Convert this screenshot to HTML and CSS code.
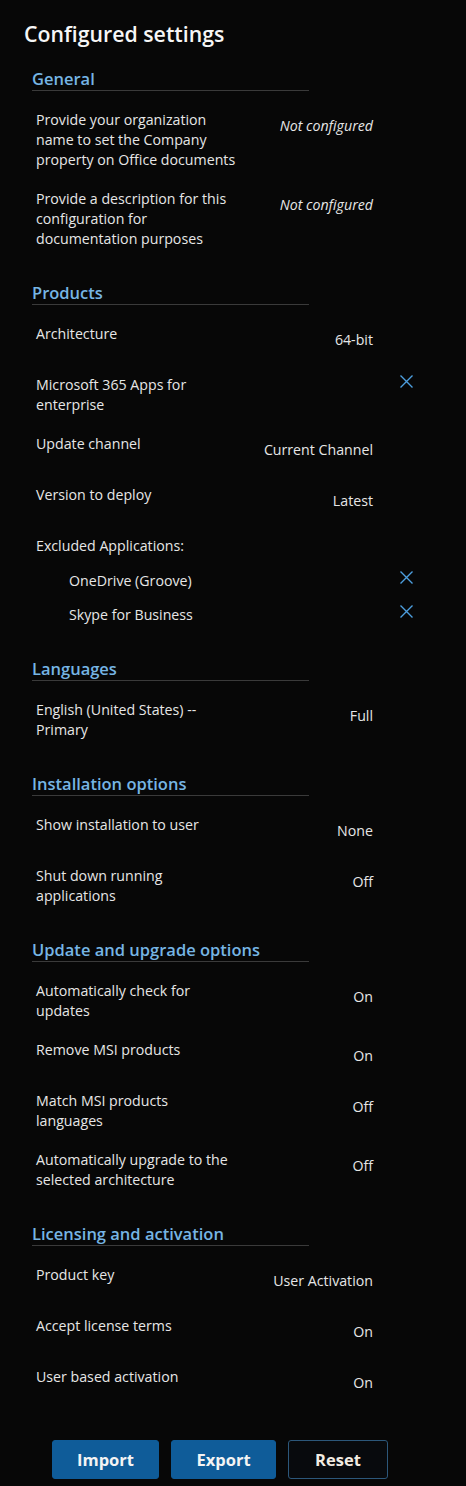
FILE: index.html
```html
<!DOCTYPE html>
<html lang="en">
<head>
<meta charset="utf-8">
<title>Configured settings</title>
<link rel="stylesheet" href="styles.css">
</head>
<body>
<main class="panel">
  <h1 class="title">Configured settings</h1>

  <section class="group">
    <h2 class="group-title">General</h2>
    <div class="row">
      <div class="label">Provide your organization name to set the Company property on Office documents</div>
      <div class="value italic">Not configured</div>
    </div>
    <div class="row">
      <div class="label">Provide a description for this configuration for documentation purposes</div>
      <div class="value italic">Not configured</div>
    </div>
  </section>

  <section class="group">
    <h2 class="group-title">Products</h2>
    <div class="row">
      <div class="label">Architecture</div>
      <div class="value">64-bit</div>
    </div>
    <div class="row">
      <div class="label">Microsoft 365 Apps for enterprise</div>
      <div class="value"></div>
      <button class="remove" aria-label="Remove"><svg viewBox="0 0 13 13" width="13" height="13"><path d="M0.5 0.5L12.5 12.5M12.5 0.5L0.5 12.5"/></svg></button>
    </div>
    <div class="row">
      <div class="label">Update channel</div>
      <div class="value">Current Channel</div>
    </div>
    <div class="row">
      <div class="label">Version to deploy</div>
      <div class="value">Latest</div>
    </div>
    <div class="excluded">
      <div class="excluded-label">Excluded Applications:</div>
      <div class="sub-row">
        <div class="sub-label">OneDrive (Groove)</div>
        <button class="remove" aria-label="Remove"><svg viewBox="0 0 13 13" width="13" height="13"><path d="M0.5 0.5L12.5 12.5M12.5 0.5L0.5 12.5"/></svg></button>
      </div>
      <div class="sub-row">
        <div class="sub-label">Skype for Business</div>
        <button class="remove" aria-label="Remove"><svg viewBox="0 0 13 13" width="13" height="13"><path d="M0.5 0.5L12.5 12.5M12.5 0.5L0.5 12.5"/></svg></button>
      </div>
    </div>
  </section>

  <section class="group">
    <h2 class="group-title">Languages</h2>
    <div class="row">
      <div class="label">English (United States) -- Primary</div>
      <div class="value">Full</div>
    </div>
  </section>

  <section class="group">
    <h2 class="group-title">Installation options</h2>
    <div class="row">
      <div class="label">Show installation to user</div>
      <div class="value">None</div>
    </div>
    <div class="row">
      <div class="label">Shut down running applications</div>
      <div class="value">Off</div>
    </div>
  </section>

  <section class="group">
    <h2 class="group-title">Update and upgrade options</h2>
    <div class="row">
      <div class="label">Automatically check for updates</div>
      <div class="value">On</div>
    </div>
    <div class="row">
      <div class="label">Remove MSI products</div>
      <div class="value">On</div>
    </div>
    <div class="row">
      <div class="label">Match MSI products languages</div>
      <div class="value">Off</div>
    </div>
    <div class="row">
      <div class="label">Automatically upgrade to the selected architecture</div>
      <div class="value">Off</div>
    </div>
  </section>

  <section class="group">
    <h2 class="group-title">Licensing and activation</h2>
    <div class="row">
      <div class="label">Product key</div>
      <div class="value">User Activation</div>
    </div>
    <div class="row">
      <div class="label">Accept license terms</div>
      <div class="value">On</div>
    </div>
    <div class="row">
      <div class="label">User based activation</div>
      <div class="value">On</div>
    </div>
  </section>

  <div class="actions">
    <button class="btn btn-primary btn-import">Import</button>
    <button class="btn btn-primary btn-export">Export</button>
    <button class="btn btn-outline btn-reset">Reset</button>
  </div>
</main>
</body>
</html>
```

FILE: styles.css
```css
* {
  box-sizing: border-box;
}

html, body {
  margin: 0;
  padding: 0;
  background: #070707;
}

body {
  font-family: "Open Sans", "Noto Sans", "Liberation Sans", sans-serif;
  color: #e6e6e6;
  font-size: 14.2px;
}

.panel {
  width: 466px;
  min-height: 1486px;
  padding: 20px 0 0 24px;
}

.title {
  margin: 0;
  font-size: 21.3px;
  line-height: 28px;
  font-weight: 600;
  color: #f6f6f6;
}

.group {
  display: flow-root;
  width: 381px;
  margin: 0 0 0 8px;
  padding-bottom: 14px;
}

.group:first-of-type {
  margin-top: 20px;
}

.group-title {
  width: 277px;
  margin: 0 0 19px 0;
  font-size: 16.5px;
  line-height: 22px;
  font-weight: 600;
  color: #76b5e4;
  border-bottom: 1px solid #3a3a3a;
}

.row {
  display: grid;
  grid-template-columns: 201px 136px 40px;
  align-items: start;
  min-height: 32px;
  margin-bottom: 19px;
  padding-left: 4px;
  line-height: 20px;
}

.label {
  color: #e6e6e6;
}

.value {
  padding-top: 6px;
  text-align: right;
  white-space: nowrap;
}

.italic {
  font-style: italic;
}

.remove {
  justify-self: end;
  width: 13px;
  height: 13px;
  padding: 0;
  margin: 0;
  border: 0;
  background: transparent;
  display: block;
}

.remove svg {
  display: block;
  stroke: #4d9fdf;
  stroke-width: 1.4;
  fill: none;
}

.excluded {
  padding-left: 4px;
  margin-bottom: 19px;
  line-height: 20px;
}

.sub-row {
  display: grid;
  grid-template-columns: 1fr 40px;
  align-items: start;
  margin-top: 14.5px;
  padding-left: 33px;
}

.actions {
  display: flex;
  gap: 12px;
  margin: 8px 0 0 28px;
}

.btn {
  height: 39px;
  padding: 0;
  font-family: "Open Sans", "Noto Sans", "Liberation Sans", sans-serif;
  font-size: 16.5px;
  font-weight: 700;
  border-radius: 3px;
  cursor: pointer;
}

.btn-primary {
  background: #0f5c99;
  border: 1px solid #0f5c99;
  color: #f4f4f4;
}

.btn-outline {
  background: #080a0d;
  border: 1px solid #2c577a;
  color: #f2ece2;
}

.btn-import {
  width: 107px;
}

.btn-export {
  width: 105px;
}

.btn-reset {
  width: 100px;
}
```
